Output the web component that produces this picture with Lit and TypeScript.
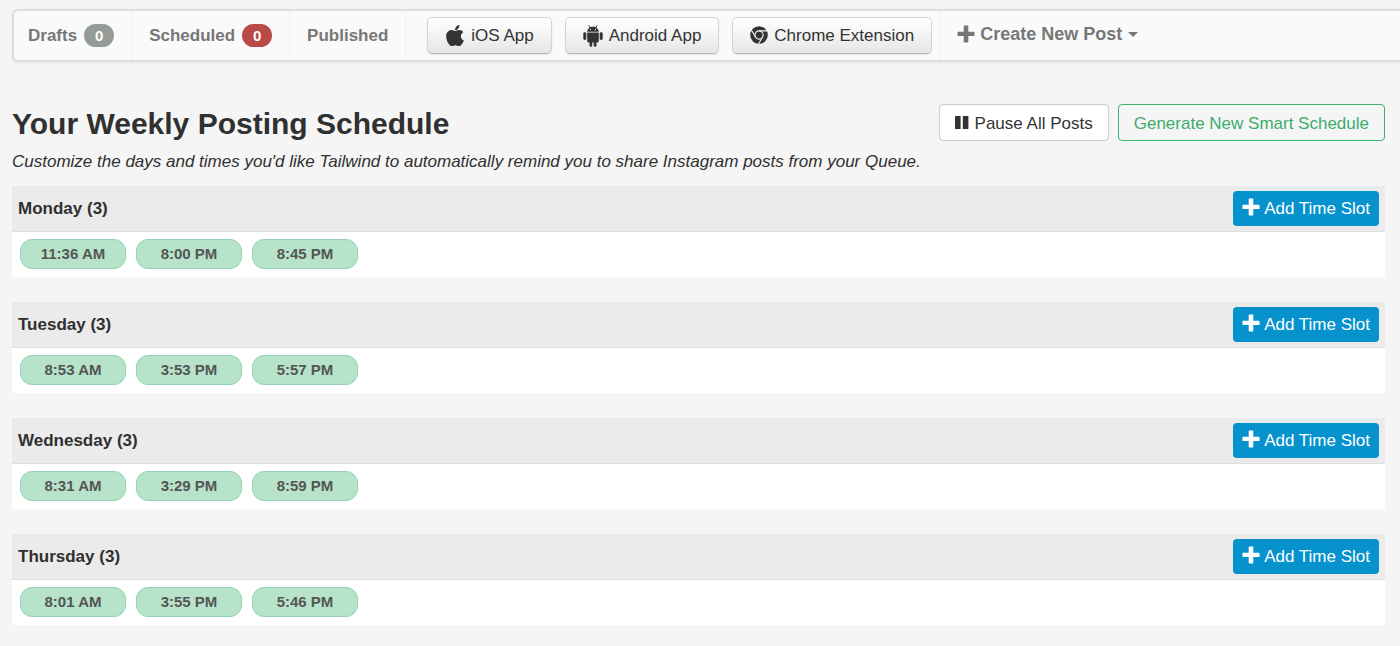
import { LitElement, html, css } from "lit";
import { customElement, property } from "lit/decorators.js";

const appleIcon = html`<svg class="icon" width="20" height="24" viewBox="0 10 384 512" aria-hidden="true">
  <path d="M318.7 268.7c-.2-36.7 16.4-64.4 50-84.8-18.8-26.9-47.2-41.7-84.7-44.6-35.5-2.8-74.3 20.7-88.5 20.7-15 0-49.4-19.7-76.4-19.7C63.3 141.2 4 184.8 4 273.5q0 39.3 14.4 81.2c12.8 36.7 59 126.7 107.2 125.2 25.2-.6 43-17.9 75.8-17.9 31.8 0 48.3 17.9 76.4 17.9 48.6-.7 90.4-82.5 102.6-119.3-65.2-30.7-61.7-90-61.7-91.9zm-56.6-164.2c27.3-32.4 24.8-61.9 24-72.5-24.1 1.4-52 16.4-67.9 34.9-17.5 19.8-27.8 44.3-25.6 71.9 26.1 2 49.9-11.4 69.5-34.3z"/>
</svg>`;

const androidIcon = html`<svg class="icon" width="20" height="22" viewBox="0 0 20 22" aria-hidden="true">
  <path d="M5.900.5 7.200 2.700M14.100.5 12.800 2.700" stroke="currentColor" stroke-width=".9" stroke-linecap="round"/>
  <path fill-rule="evenodd" d="M4.200 6.800C4.300 3.900 6.700 1.800 10 1.800s5.700 2.100 5.800 5zM7.500 3.900a.65.65 0 1 0 0 1.300.65.65 0 0 0 0-1.300zM12.500 3.900a.65.65 0 1 0 0 1.300.65.65 0 0 0 0-1.300z"/>
  <path d="M4.200 7.400h11.600v8.700c0 .8-.6 1.400-1.400 1.400h-.9v2.900a1.400 1.400 0 0 1-2.800 0v-2.900H9.300v2.900a1.400 1.400 0 0 1-2.800 0v-2.900h-.9c-.8 0-1.400-.6-1.400-1.400z"/>
  <rect x=".3" y="7.200" width="3" height="7.800" rx="1.400"/>
  <rect x="16.700" y="7.200" width="3" height="7.800" rx="1.400"/>
</svg>`;

const chromeIcon = html`<svg class="icon" width="18" height="20" viewBox="0 0 18 20" aria-hidden="true">
  <circle cx="9" cy="9" r="8.800"/>
  <g fill="none" stroke="#f4f4f4" stroke-width="1.100">
    <circle cx="9" cy="9" r="4.100"/>
    <path d="M9 4.900H17.200M5.450 11.050 1.400 4M12.550 11.050 8.500 18"/>
  </g>
</svg>`;

const plusIcon = html`<svg class="icon" width="18" height="18" viewBox="0 0 18 18" aria-hidden="true">
  <path d="M7.300.5h3.400a.6.6 0 0 1 .6.6v5.600h5.600a.6.6 0 0 1 .6.6v3.200a.6.6 0 0 1-.6.6h-5.600v5.700a.6.6 0 0 1-.6.6H7.300a.6.6 0 0 1-.6-.6v-5.700H1.100a.6.6 0 0 1-.6-.6V7.300a.6.6 0 0 1 .6-.6h5.600V1.100a.6.6 0 0 1 .6-.6z"/>
</svg>`;

const pauseIcon = html`<svg class="icon" width="14" height="18" viewBox="0 0 14 18" aria-hidden="true">
  <rect x="0" y="1" width="5.600" height="13" rx=".6"/><rect x="7.800" y="1" width="5.600" height="13" rx=".6"/>
</svg>`;

const baseStyles = css`
  * {
    box-sizing: border-box;
  }
  button {
    font: inherit;
    margin: 0;
    cursor: pointer;
    white-space: nowrap;
  }
  .icon {
    display: block;
    flex: none;
    fill: currentColor;
  }
`;

@customElement("day-schedule")
export class DaySchedule extends LitElement {
  @property() day = "";
  @property({ attribute: false }) times: string[] = [];

  static styles = [
    baseStyles,
    css`
      :host {
        display: block;
      }
      .head {
        display: flex;
        align-items: center;
        justify-content: space-between;
        padding: 5px 6px;
        background: #ebebeb;
        border-bottom: 1px solid #dedede;
      }
      .day {
        margin: 0;
        font-size: 17px;
        line-height: 20px;
        font-weight: 700;
      }
      .add {
        display: flex;
        align-items: center;
        gap: 4px;
        height: 35px;
        padding: 0 9px;
        border: 0;
        border-radius: 4px;
        background: #0692cc;
        color: #fff;
      }
      .add .icon {
        margin-bottom: 3px;
      }
      .slots {
        display: flex;
        flex-wrap: wrap;
        gap: 10px;
        margin: 0;
        padding: 7px 8px 8px;
        list-style: none;
        background: #fff;
      }
      .slot {
        width: 106px;
        height: 30px;
        padding: 0;
        border: 1px solid #93d3b0;
        border-radius: 12px;
        background: #b6e3c9;
        color: #555;
        font-size: 15px;
        font-weight: 700;
      }
    `,
  ];

  render() {
    return html`
      <section>
        <header class="head">
          <h2 class="day">${this.day} (${this.times.length})</h2>
          <button class="add" type="button">${plusIcon}<span>Add Time Slot</span></button>
        </header>
        <ul class="slots">
          ${this.times.map((t) => html`<li><button class="slot" type="button">${t}</button></li>`)}
        </ul>
      </section>
    `;
  }
}

@customElement("app-root")
export class AppRoot extends LitElement {
  private schedule = [
    { day: "Monday", times: ["11:36 AM", "8:00 PM", "8:45 PM"] },
    { day: "Tuesday", times: ["8:53 AM", "3:53 PM", "5:57 PM"] },
    { day: "Wednesday", times: ["8:31 AM", "3:29 PM", "8:59 PM"] },
    { day: "Thursday", times: ["8:01 AM", "3:55 PM", "5:46 PM"] },
  ];

  static styles = [
    baseStyles,
    css`
      :host {
        display: block;
        min-height: 100vh;
        padding: 9px 0 21px 12px;
        box-sizing: border-box;
        background: #f5f5f5;
        color: #303030;
        font-family: "Liberation Sans", Arial, sans-serif;
        font-size: 17px;
        line-height: 20px;
      }
      .nav {
        display: flex;
        align-items: stretch;
        height: 53px;
        border: 2px solid #dcdcdc;
        border-right: 0;
        border-radius: 6px 0 0 6px;
        background: #fafafa;
        box-shadow: 0 1px 3px rgba(0, 0, 0, 0.07);
      }
      .tab {
        display: flex;
        align-items: center;
        gap: 7px;
        padding: 0 17px;
        border-right: 1px solid #f0f0f0;
        color: #777;
        font-weight: 700;
        text-decoration: none;
        white-space: nowrap;
      }
      .tab:first-child {
        padding-left: 14px;
      }
      .badge {
        min-width: 30px;
        padding: 2px 0;
        border-radius: 12px;
        background: #959b97;
        color: #fff;
        font-size: 15px;
        line-height: 19px;
        text-align: center;
      }
      .badge.alert {
        background: #b94a48;
      }
      .apps {
        display: flex;
        align-items: center;
        gap: 13px;
        padding: 0 7px 0 21px;
        border-right: 1px solid #f0f0f0;
      }
      .app {
        display: flex;
        align-items: center;
        gap: 6px;
        height: 37px;
        padding: 0 17px;
        border: 1px solid #d4d4d4;
        border-bottom-color: #b5b5b5;
        border-radius: 5px;
        background: linear-gradient(#fff, #e6e6e6);
        color: #333;
        box-shadow: 0 1px 2px rgba(0, 0, 0, 0.08);
      }
      .create {
        display: flex;
        align-items: center;
        gap: 5px;
        padding: 0 17px 3px;
        border: 0;
        background: none;
        color: #777;
        font-size: 18px;
        font-weight: 700;
      }
      .caret {
        margin-left: 1px;
        border: 5px solid transparent;
        border-top-color: currentColor;
        border-bottom: 0;
      }
      .content {
        padding: 42px 15px 0 0;
      }
      .heading {
        display: flex;
        align-items: flex-start;
        justify-content: space-between;
        flex-wrap: wrap;
      }
      .title {
        margin: 0;
        font-size: 30px;
        line-height: 40px;
      }
      .actions {
        display: flex;
        gap: 9px;
      }
      .action {
        display: flex;
        align-items: center;
        gap: 6px;
        height: 37px;
        padding: 2px 15px 0;
        border: 1px solid #ccc;
        border-radius: 4px;
        background: #fff;
        color: #333;
      }
      .action.smart {
        border-color: #3cb371;
        background: none;
        color: #3bad6b;
      }
      .intro {
        margin: 8px 0 14px;
        font-style: italic;
      }
      .week {
        display: grid;
        gap: 25px;
      }
    `,
  ];

  render() {
    return html`
      <nav class="nav">
        <a class="tab" href="#drafts">Drafts <span class="badge">0</span></a>
        <a class="tab" href="#scheduled">Scheduled <span class="badge alert">0</span></a>
        <a class="tab" href="#published">Published</a>
        <div class="apps">
          <button class="app" type="button">${appleIcon}<span>iOS App</span></button>
          <button class="app" type="button">${androidIcon}<span>Android App</span></button>
          <button class="app" type="button">${chromeIcon}<span>Chrome Extension</span></button>
        </div>
        <button class="create" type="button">${plusIcon}<span>Create New Post</span><span class="caret"></span></button>
      </nav>
      <main class="content">
        <div class="heading">
          <h1 class="title">Your Weekly Posting Schedule</h1>
          <div class="actions">
            <button class="action" type="button">${pauseIcon}<span>Pause All Posts</span></button>
            <button class="action smart" type="button">Generate New Smart Schedule</button>
          </div>
        </div>
        <p class="intro">
          Customize the days and times you'd like Tailwind to automatically remind you to share Instagram posts from your Queue.
        </p>
        <div class="week">
          ${this.schedule.map((d) => html`<day-schedule .day=${d.day} .times=${d.times}></day-schedule>`)}
        </div>
      </main>
    `;
  }
}
